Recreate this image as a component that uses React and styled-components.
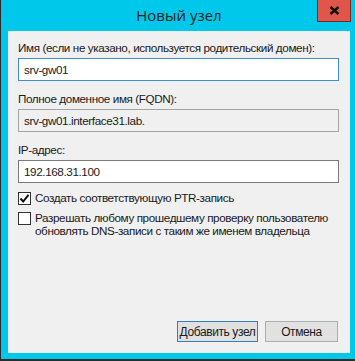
import React from 'react'
import styled, { createGlobalStyle } from 'styled-components'

const GlobalStyle = createGlobalStyle`
  html, body {
    margin: 0;
    padding: 0;
    background: #1e1e1e;
  }
  * {
    box-sizing: border-box;
  }
`

const Window = styled.div`
  width: 355px;
  height: 361px;
  background: #00c8ea;
  border-left: 1px solid #2b2b2b;
  border-bottom: 2px solid #2b2b2b;
  display: flex;
  flex-direction: column;
  font-family: "Liberation Sans", Arial, sans-serif;
`

const TitleBar = styled.div`
  position: relative;
  height: 31px;
  flex-shrink: 0;
  display: flex;
  align-items: center;
  justify-content: center;
  padding-bottom: 1px;
`

const Title = styled.div`
  font-family: "Open Sans", "Noto Sans", sans-serif;
  font-size: 15px;
  color: #1f1f1f;
  margin-left: 2px;
`

const CloseButton = styled.div`
  position: absolute;
  top: 0;
  right: 4px;
  width: 34px;
  height: 22px;
  background: #e0564a;
  border: 1px solid #6f2c25;
  border-top: none;
  display: flex;
  align-items: center;
  justify-content: center;
`

const Body = styled.div`
  flex: 1;
  margin: 0 5px 6px 7px;
  background: #f0f0f0;
  padding: 9px 10px 11px 10px;
  display: flex;
  flex-direction: column;
  font-size: 11.7px;
  letter-spacing: -0.4px;
  white-space: nowrap;
  color: #1a1a1a;
`

const Label = styled.div`
  height: 15px;
  line-height: 15px;
  margin-bottom: 3px;
`

const Input = styled.div`
  height: 23px;
  width: 321px;
  border: 1px solid ${p => (p.$focused ? '#3d8ed4' : p.$readonly ? '#a5a5a5' : '#7a7a7a')};
  background: ${p => (p.$readonly ? '#f0f0f0' : '#ffffff')};
  padding: 0 5px;
  display: flex;
  align-items: center;
  margin-bottom: 10px;
`

const CheckRow = styled.div`
  display: flex;
  align-items: flex-start;
  gap: 4px;
  margin-top: ${p => p.$mt || 0}px;
`

const Box = styled.div`
  width: 13px;
  height: 13px;
  flex-shrink: 0;
  border: 1px solid #333;
  background: #fff;
  margin-top: 1px;
  display: flex;
  align-items: center;
  justify-content: center;
`

const CheckText = styled.div`
  line-height: 12.5px;
  padding-top: 1px;
`

const Footer = styled.div`
  margin-top: auto;
  display: flex;
  justify-content: flex-end;
  gap: 7px;
  padding-right: 2px;
`

const Button = styled.div`
  width: ${p => p.$w}px;
  height: 21px;
  background: #e1e1e1;
  border: 1px solid ${p => (p.$primary ? '#2f7fc2' : '#adadad')};
  display: flex;
  align-items: center;
  justify-content: center;
  font-size: 12px;
`

export default function App() {
  return (
    <>
      <GlobalStyle />
      <Window>
        <TitleBar>
          <Title>Новый узел</Title>
          <CloseButton>
            <svg width="11" height="9" viewBox="0 0 11 9">
              <path d="M1.5 1 L9.5 8 M9.5 1 L1.5 8" stroke="#111" strokeWidth="2.4" />
            </svg>
          </CloseButton>
        </TitleBar>
        <Body>
          <Label>Имя (если не указано, используется родительский домен):</Label>
          <Input $focused>srv-gw01</Input>
          <Label>Полное доменное имя (FQDN):</Label>
          <Input $readonly>srv-gw01.interface31.lab.</Input>
          <Label>IP-адрес:</Label>
          <Input>192.168.31.100</Input>
          <CheckRow $mt={-2}>
            <Box>
              <svg width="11" height="11" viewBox="0 0 11 11">
                <path d="M1.5 5.5 L4.2 8.5 L9.5 1.8" stroke="#111" strokeWidth="2" fill="none" />
              </svg>
            </Box>
            <CheckText>Создать соответствующую PTR-запись</CheckText>
          </CheckRow>
          <CheckRow $mt={6}>
            <Box />
            <CheckText>
              Разрешать любому прошедшему проверку пользователю
              <br />
              обновлять DNS-записи с таким же именем владельца
            </CheckText>
          </CheckRow>
          <Footer>
            <Button $primary $w={81}>Добавить узел</Button>
            <Button $w={73}>Отмена</Button>
          </Footer>
        </Body>
      </Window>
    </>
  )
}
